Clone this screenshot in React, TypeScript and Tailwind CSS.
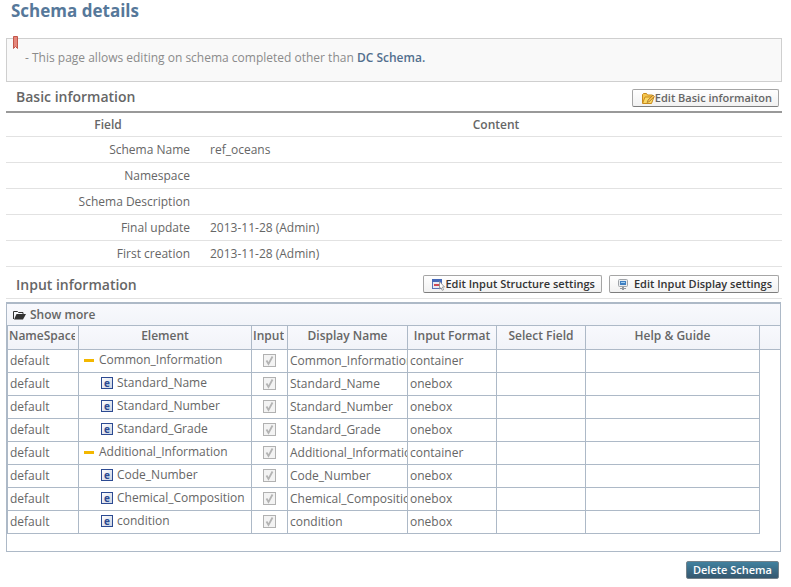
import React from "react";

const font = "font-['Open_Sans','Noto_Sans_CJK_KR',sans-serif]";

const details = [
  { field: "Schema Name", content: "ref_oceans" },
  { field: "Namespace", content: "" },
  { field: "Schema Description", content: "" },
  { field: "Final update", content: "2013-11-28 (Admin)" },
  { field: "First creation", content: "2013-11-28 (Admin)" },
];

const elements = [
  { name: "Common_Information", format: "container" },
  { name: "Standard_Name", format: "onebox" },
  { name: "Standard_Number", format: "onebox" },
  { name: "Standard_Grade", format: "onebox" },
  { name: "Additional_Information", format: "container" },
  { name: "Code_Number", format: "onebox" },
  { name: "Chemical_Composition", format: "onebox" },
  { name: "condition", format: "onebox" },
];

function BookmarkIcon() {
  return (
    <svg className="absolute -top-[3px] left-[6px]" width="5" height="13" viewBox="0 0 5 13">
      <path d="M.5.5h4v12l-2-2-2 2z" fill="#e5877c" stroke="#c2564a" />
    </svg>
  );
}

function FolderEditIcon() {
  return (
    <svg className="shrink-0" width="14" height="14" viewBox="0 0 14 14">
      <path d="M1.500 12V3.500l1-1h3l1 1.500h5v2" fill="#f4c64e" stroke="#c98a1d" />
      <path d="M1.500 12.500 4 6h9l-2.500 6.500z" fill="#fbd965" stroke="#c98a1d" />
      <path d="m6 11.500 1-2.500 5-5 1.500 1.500-5 5z" fill="#f6b84a" stroke="#8a6a2a" strokeWidth=".6" />
    </svg>
  );
}

function StructureIcon() {
  return (
    <svg className="shrink-0" width="14" height="14" viewBox="0 0 14 14">
      <rect x="1.500" y="2.500" width="9" height="9" fill="#e6ebf6" stroke="#5871b4" />
      <path d="M1 2h10v3H1z" fill="#4468b8" />
      <path d="M3 7h6v2H3z" fill="#cf4a55" />
      <path d="M8.500 4.500v7.500l1.500-1.300 1.200 2.600 1.400-.6-1.200-2.700h2.100z" fill="#fff" stroke="#888" strokeWidth=".8" />
    </svg>
  );
}

function DisplayIcon() {
  return (
    <svg className="shrink-0" width="14" height="14" viewBox="0 0 14 14">
      <rect x="2.500" y="2.500" width="9" height="7" rx="1" fill="#e8ebee" stroke="#a0a4a9" />
      <path d="M4 4h6v4H4z" fill="#3f7fc1" />
      <path d="M5 5h4v1H5z" fill="#9fd0f3" />
      <path d="M4 11h2v-1h2v1h2v1H8v1H6v-1H4z" fill="#94989d" />
    </svg>
  );
}

function OpenFolderIcon() {
  return (
    <svg width="13" height="10" viewBox="0 0 13 10">
      <path d="M.5 9V1.500h4l1 1H10V4" fill="none" stroke="#333" />
      <path d="M1 9.500 3.500 4H13l-3 5.500z" fill="#333" />
    </svg>
  );
}

function PageButton({ children, className }: { children: React.ReactNode; className: string }) {
  return (
    <button
      type="button"
      className={`flex h-[18px] items-center rounded-[2px] border border-[#a5a5a5] border-b-[#7d7d7d] bg-linear-to-b from-white to-[#f1f1f1] pr-[6px] pb-px text-[11px] leading-4 font-semibold whitespace-nowrap ${className}`}
    >
      {children}
    </button>
  );
}

function ElementLabel({ name, group }: { name: string; group: boolean }) {
  if (group) {
    return (
      <div className="flex items-center gap-[5px] pl-[5px]">
        <span className="h-[3px] w-[10px] bg-[#f3b700]" />
        {name}
      </div>
    );
  }
  return (
    <div className="flex items-center gap-1 pl-[22px]">
      <span className="flex size-3 items-center justify-center border border-[#2c4a92] bg-linear-to-br from-white to-[#ccd3e2] text-[10px] leading-none font-bold text-[#2c4a92]">
        e
      </span>
      {name}
    </div>
  );
}

function InputGrid() {
  const head = "h-6 overflow-hidden border-r border-b border-[#adb9c7] px-px pb-1 text-center font-semibold";
  const cell = "h-[23px] overflow-hidden border-r border-b border-[#adb9c7] pl-[2px] text-left";
  return (
    <div className="mr-px border border-t-2 border-[#adb9c7] pb-[17px]">
      <button
        type="button"
        className="flex h-[21px] w-full items-center gap-1 bg-linear-to-b from-[#f8f9fd] to-[#f2f4f9] pl-[6px] text-left text-xs font-semibold"
      >
        <OpenFolderIcon />
        Show more
      </button>
      <table className="w-full table-fixed border-separate border-spacing-0 border-t border-l border-[#adb9c7] text-xs leading-4 whitespace-nowrap">
        <colgroup>
          <col className="w-[71px]" />
          <col className="w-[173px]" />
          <col className="w-[36px]" />
          <col className="w-[120px]" />
          <col className="w-[89px]" />
          <col className="w-[89px]" />
          <col />
          <col className="w-[20px]" />
        </colgroup>
        <thead className="bg-linear-to-b from-[#f8f9fd] to-[#f1f3f8]">
          <tr>
            <th className={head}><div className="w-[66px] overflow-hidden text-left">NameSpace</div></th>
            <th className={head}>Element</th>
            <th className={head}><div className="w-[31px] overflow-hidden text-left">Input</div></th>
            <th className={head}>Display Name</th>
            <th className={head}>Input Format</th>
            <th className={head}>Select Field</th>
            <th className={head}>Help &amp; Guide</th>
            <td className="border-b border-[#adb9c7]" />
          </tr>
        </thead>
        <tbody>
          {elements.map((el) => (
            <tr key={el.name}>
              <td className={cell}>default</td>
              <td className="h-[23px] border-r border-b border-[#adb9c7] pb-[2px]">
                <ElementLabel name={el.name} group={el.format === "container"} />
              </td>
              <td className="border-r border-b border-[#adb9c7] pb-px">
                <div className="relative mx-auto size-[13px]">
                  <input
                    type="checkbox"
                    checked
                    disabled
                    readOnly
                    aria-label={el.name}
                    className="block size-[13px] appearance-none border border-[#b1b1b1] bg-[#f3f3f3]"
                  />
                  <svg className="absolute inset-0" width="13" height="13" viewBox="0 0 13 13">
                    <path d="m3.500 6.500 2 3.500 4-7.500" fill="none" stroke="#b3b3b3" strokeWidth="1.800" />
                  </svg>
                </div>
              </td>
              <td className={cell}>{el.name}</td>
              <td className={cell}>{el.format}</td>
              <td className={cell} />
              <td className={cell} />
              <td />
            </tr>
          ))}
        </tbody>
      </table>
    </div>
  );
}

export default function App() {
  return (
    <main className={`bg-white pr-[9px] pl-[6px] text-[#666] ${font}`}>
      <h1 className="pl-[5px] text-[17px] leading-[22px] font-bold text-[#56789a]">Schema details</h1>
      <div className="relative mt-4 flex h-11 items-center border border-[#cfcfcf] bg-[#f9f9f9] pb-1 pl-[18px] text-xs text-[#8b8b8b]">
        <BookmarkIcon />
        <p>
          - This page allows editing on schema completed other than{" "}
          <b className="font-semibold text-[#526f8e]">DC Schema.</b>
        </p>
      </div>

      <section>
        <header className="flex h-[29px] items-end justify-between pr-[3px] pb-1 pl-[10px]">
          <h2 className="text-sm leading-5 font-semibold">Basic information</h2>
          <PageButton className="pl-2">
            <FolderEditIcon />
            Edit Basic informaiton
          </PageButton>
        </header>
        <table className="w-full table-fixed border-separate border-spacing-0 border-t-2 border-[#999] text-xs leading-4">
          <colgroup>
            <col className="w-[204px]" />
            <col />
          </colgroup>
          <thead>
            <tr>
              <th className="h-6 border-b border-[#e2e2e2] font-semibold">Field</th>
              <th className="border-b border-[#e2e2e2] font-semibold">Content</th>
            </tr>
          </thead>
          <tbody>
            {details.map((row) => (
              <tr key={row.field}>
                <th className="h-[26px] border-b border-[#e2e2e2] pr-5 text-right font-normal">{row.field}</th>
                <td className="border-b border-[#e2e2e2]">{row.content}</td>
              </tr>
            ))}
          </tbody>
        </table>
      </section>

      <section>
        <header className="mb-[3px] flex h-8 items-end justify-between border-b border-[#e2e2e2] pr-[3px] pb-[5px] pl-[10px]">
          <h2 className="text-sm leading-4 font-semibold">Input information</h2>
          <div className="flex gap-[7px] text-[#333]">
            <PageButton className="pl-[7px]">
              <StructureIcon />
              Edit Input Structure settings
            </PageButton>
            <PageButton className="gap-1 pl-[6px]">
              <DisplayIcon />
              Edit Input Display settings
            </PageButton>
          </div>
        </header>
        <InputGrid />
      </section>

      <footer className="flex justify-end pt-[9px] pr-[3px]">
        <button
          type="button"
          className="h-[18px] rounded-[2px] border border-[#74828a] bg-linear-to-b from-[#41819f] to-[#35586f] px-[6px] text-[11px] leading-4 font-semibold text-white"
        >
          Delete Schema
        </button>
      </footer>
    </main>
  );
}
